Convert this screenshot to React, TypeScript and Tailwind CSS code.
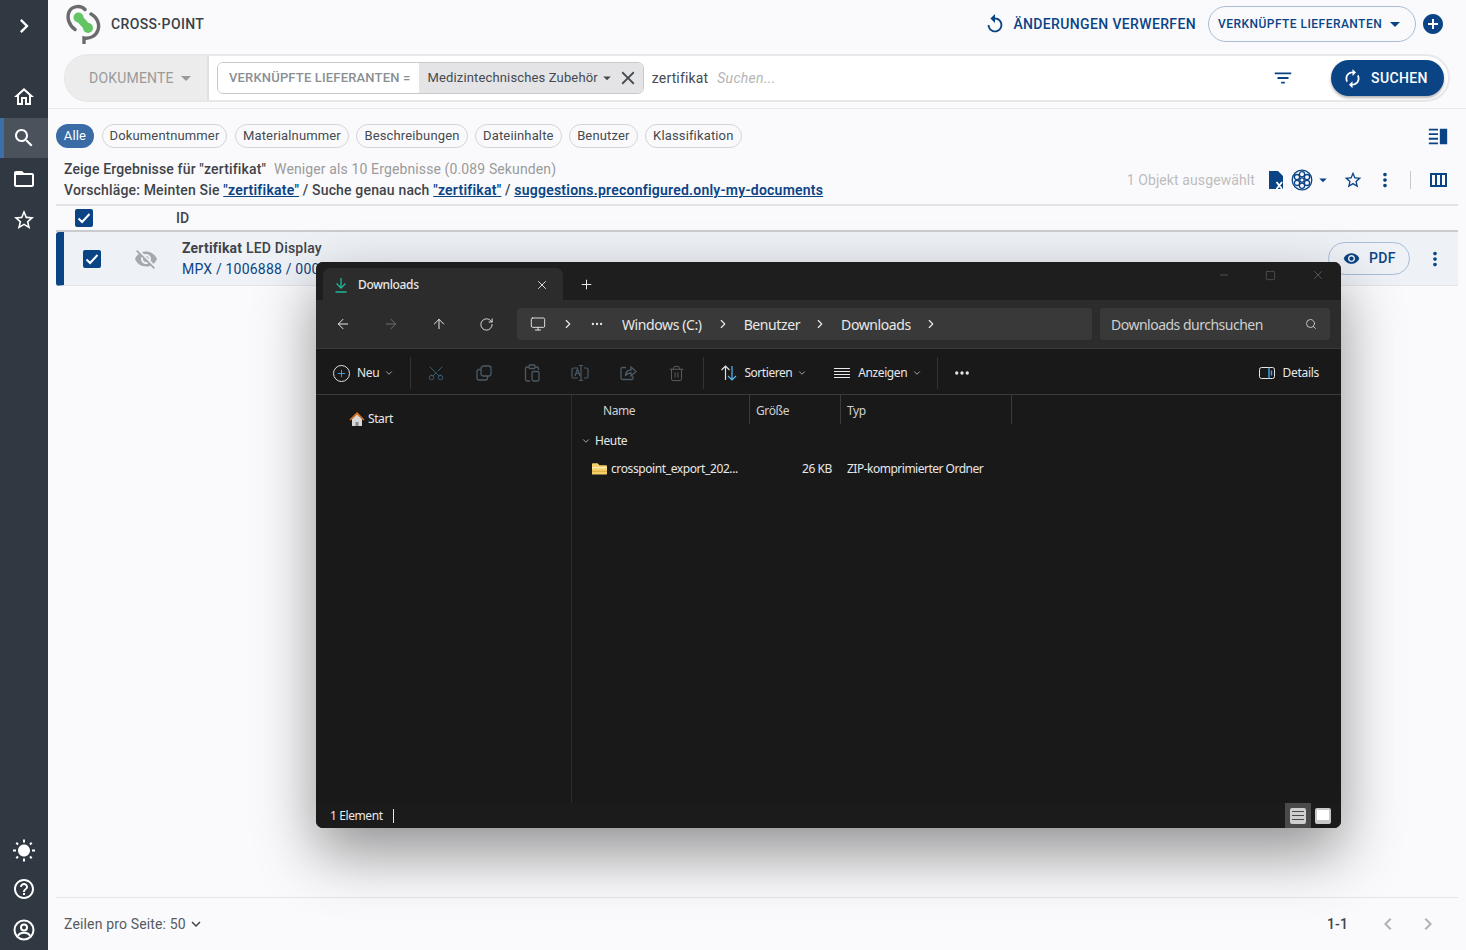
import {
  ArrowLeft,
  ArrowRight,
  ArrowUp,
  ChevronDown,
  ChevronRight,
  Ellipsis,
  Minus,
  Monitor,
  Plus,
  RotateCw,
  Scissors,
  Search,
  Square,
  Trash2,
  X,
} from 'lucide-react';
import type { ReactNode } from 'react';

const paths = {
  home: 'M12 5.69l5 4.5V18h-2v-6H9v6H7v-7.81l5-4.5M12 3L2 12h3v8h6v-6h2v6h6v-8h3L12 3z',
  search:
    'M15.5 14h-.79l-.28-.27C15.41 12.59 16 11.11 16 9.5 16 5.91 13.09 3 9.5 3S3 5.91 3 9.5 5.91 16 9.5 16c1.61 0 3.09-.59 4.23-1.57l.27.28v.79l5 4.99L20.49 19l-4.99-5zm-6 0C7.01 14 5 11.99 5 9.5S7.01 5 9.5 5 14 7.01 14 9.5 11.99 14 9.5 14z',
  folder:
    'M20 6h-8l-2-2H4c-1.1 0-1.99.9-1.99 2L2 18c0 1.1.9 2 2 2h16c1.1 0 2-.9 2-2V8c0-1.1-.9-2-2-2zm0 12H4V8h16v10z',
  star: 'M22 9.24l-7.19-.62L12 2 9.19 8.63 2 9.24l5.46 4.73L5.82 21 12 17.27 18.18 21l-1.63-7.03L22 9.24zM12 15.4l-3.76 2.27 1-4.28-3.32-2.88 4.38-.38L12 6.1l1.71 4.04 4.38.38-3.32 2.88 1 4.28L12 15.4z',
  chevronRight: 'M10 6L8.59 7.41 13.17 12l-4.58 4.59L10 18l6-6z',
  chevronLeft: 'M15.41 7.41L14 6l-6 6 6 6 1.41-1.41L10.83 12z',
  expand: 'M16.59 8.59L12 13.17 7.41 8.59 6 10l6 6 6-6z',
  sun: 'M6.76 4.84l-1.8-1.79-1.41 1.41 1.79 1.79 1.42-1.41zM4 10.5H1v2h3v-2zm9-9.95h-2V3.5h2V.55zm7.45 3.91l-1.41-1.41-1.79 1.79 1.41 1.41 1.79-1.79zm-3.21 13.7l1.79 1.8 1.41-1.41-1.8-1.79-1.4 1.4zM20 10.5v2h3v-2h-3zm-8-5c-3.31 0-6 2.69-6 6s2.69 6 6 6 6-2.69 6-6-2.69-6-6-6zm-1 16.95h2V19.5h-2v2.95zm-7.45-3.91l1.41 1.41 1.79-1.8-1.41-1.41-1.79 1.8z',
  help: 'M11 18h2v-2h-2v2zm1-16C6.48 2 2 6.48 2 12s4.48 10 10 10 10-4.48 10-10S17.52 2 12 2zm0 18c-4.41 0-8-3.59-8-8s3.59-8 8-8 8 3.59 8 8-3.59 8-8 8zm0-14c-2.21 0-4 1.79-4 4h2c0-1.1.9-2 2-2s2 .9 2 2c0 2-3 1.75-3 5h2c0-2.25 3-2.5 3-5 0-2.21-1.79-4-4-4z',
  eye: 'M12 4.5C7 4.5 2.73 7.61 1 12c1.73 4.39 6 7.5 11 7.5s9.27-3.11 11-7.5c-1.73-4.39-6-7.5-11-7.5zM12 17c-2.76 0-5-2.24-5-5s2.24-5 5-5 5 2.24 5 5-2.24 5-5 5zm0-8c-1.66 0-3 1.34-3 3s1.34 3 3 3 3-1.34 3-3-1.34-3-3-3z',
  eyeOff:
    'M12 7c2.76 0 5 2.24 5 5 0 .65-.13 1.26-.36 1.83l2.92 2.92c1.51-1.26 2.7-2.89 3.43-4.75-1.73-4.39-6-7.5-11-7.5-1.4 0-2.74.25-3.98.7l2.16 2.16C10.74 7.13 11.35 7 12 7zM2 4.27l2.28 2.28.46.46C3.08 8.3 1.78 10.02 1 12c1.73 4.39 6 7.5 11 7.5 1.55 0 3.03-.3 4.38-.84l.42.42L19.73 22 21 20.73 3.27 3 2 4.27zM7.53 9.8l1.55 1.55c-.05.21-.08.43-.08.65 0 1.66 1.34 3 3 3 .22 0 .44-.03.65-.08l1.55 1.55c-.67.33-1.41.53-2.2.53-2.76 0-5-2.24-5-5 0-.79.2-1.53.53-2.2zm4.31-.78l3.15 3.15.02-.16c0-1.66-1.34-3-3-3l-.17.01z',
  dots: 'M12 8c1.1 0 2-.9 2-2s-.9-2-2-2-2 .9-2 2 .9 2 2 2zm0 2c-1.1 0-2 .9-2 2s.9 2 2 2 2-.9 2-2-.9-2-2-2zm0 6c-1.1 0-2 .9-2 2s.9 2 2 2 2-.9 2-2-.9-2-2-2z',
  filter: 'M10 18h4v-2h-4v2zM3 6v2h18V6H3zm3 7h12v-2H6v2z',
  renew:
    'M12 6v3l4-4-4-4v3c-4.42 0-8 3.58-8 8 0 1.57.46 3.03 1.24 4.26L6.7 14.8c-.45-.83-.7-1.79-.7-2.8 0-3.31 2.69-6 6-6zm6.76 1.74L17.3 9.2c.44.84.7 1.79.7 2.8 0 3.31-2.69 6-6 6v-3l-4 4 4 4v-3c4.42 0 8-3.58 8-8 0-1.57-.46-3.03-1.24-4.26z',
  replay: 'M12 5V1L7 6l5 5V7c3.31 0 6 2.69 6 6s-2.69 6-6 6-6-2.69-6-6H4c0 4.42 3.58 8 8 8s8-3.58 8-8-3.58-8-8-8z',
  addCircle: 'M12 2C6.48 2 2 6.48 2 12s4.48 10 10 10 10-4.48 10-10S17.52 2 12 2zm5 11h-4v4h-2v-4H7v-2h4V7h2v4h4v2z',
  columns: 'M4 5v14h17V5H4zm10 2v10h-3V7h3zM6 7h3v10H6V7zm13 10h-3V7h3v10z',
  close:
    'M19 6.41L17.59 5 12 10.59 6.41 5 5 6.41 10.59 12 5 17.59 6.41 19 12 13.41 17.59 19 19 17.59 13.41 12 19 6.41z',
  caret: 'M7 10l5 5 5-5z',
  split: 'M2 4h10v2H2zM2 9h10v2H2zM2 14h10v2H2zM2 19h10v2H2zM14 4h8v17h-8z',
};

function Icon({ d, className }: { d: string; className: string }) {
  return (
    <svg viewBox="0 0 24 24" fill="currentColor" className={className}>
      <path d={d} />
    </svg>
  );
}

function CheckBox() {
  return (
    <span className="flex h-[18px] w-[18px] items-center justify-center rounded-[2px] bg-[#0b4485]">
      <svg viewBox="0 0 18 18" className="h-[18px] w-[18px]" fill="none" stroke="white" strokeWidth="2">
        <path d="M3.5 9.5l3.6 3.5 7.4-8" />
      </svg>
    </span>
  );
}

function SideItem({ d, active }: { d: string; active?: boolean }) {
  return (
    <div
      className={`flex h-10 w-12 items-center justify-center text-white ${
        active ? 'border-l-4 border-[#3d6ea8] bg-[#4a535c] pr-1' : ''
      }`}
    >
      <Icon d={d} className="h-6 w-6" />
    </div>
  );
}

function Sidebar() {
  return (
    <aside className="flex h-[950px] w-12 shrink-0 flex-col bg-[#303842] pt-[6px]">
      <div className="flex h-10 w-12 items-center justify-center text-white">
        <Icon d={paths.chevronRight} className="h-7 w-7" />
      </div>
      <div className="mt-[31px] flex flex-col gap-[1px]">
        <SideItem d={paths.home} />
        <SideItem d={paths.search} active />
        <SideItem d={paths.folder} />
        <SideItem d={paths.star} />
      </div>
      <div className="mt-auto flex flex-col">
        <SideItem d={paths.sun} />
        <div className="mb-[3px] flex h-9 w-12 items-center justify-center text-white">
          <Icon d={paths.help} className="h-6 w-6" />
        </div>
        <div className="flex h-10 w-12 items-center justify-center text-white">
          <svg viewBox="0 0 24 24" fill="none" stroke="currentColor" strokeWidth="2" className="h-6 w-6">
            <circle cx="12" cy="12" r="9.5" />
            <circle cx="12" cy="9.5" r="3" />
            <path d="M6 18c1-3 3-3.2 6-3.2s5 .2 6 3.2" />
          </svg>
        </div>
      </div>
    </aside>
  );
}

function Logo() {
  return (
    <svg viewBox="0 0 36 40" className="h-[40px] w-[36px]" fill="none">
      <path d="M12.500 13.500l9.500 10.500" stroke="#62c462" strokeWidth="7.500" strokeLinecap="round" />
      <circle cx="12.500" cy="13.500" r="5" fill="#62c462" />
      <circle cx="22" cy="24" r="5" fill="#62c462" />
      <path d="M19 5.500C15 1 6 1.500 3 8c-2.500 6 .5 14 6 17.500" stroke="#6b6b6b" strokeWidth="3.4" strokeLinecap="round" />
      <path d="M25 10c6 3 9 10 7 16-2 6-8 9-14 8v6" stroke="#6b6b6b" strokeWidth="3.4" strokeLinecap="round" />
    </svg>
  );
}

function Header() {
  return (
    <header className="mb-[6px] flex h-12 items-center pl-[18px] pr-[21px]">
      <Logo />
      <span className="ml-[9px] text-[14px] font-medium tracking-[0.35px] text-[#3b4148]">CROSS·POINT</span>
      <div className="ml-auto flex items-center text-[#0b4485]">
        <Icon d={paths.replay} className="h-[22px] w-[22px]" />
        <span className="ml-[7px] text-[14px] font-medium tracking-[0.36px]">ÄNDERUNGEN VERWERFEN</span>
        <span className="ml-3 flex h-[36px] w-[208px] items-center rounded-full border border-[#a9bdd6] pl-[9px] text-[12px] font-medium tracking-[0.46px]">
          VERKNÜPFTE LIEFERANTEN
          <Icon d={paths.caret} className="ml-[1px] h-6 w-6" />
        </span>
        <Icon d={paths.addCircle} className="ml-[5px] h-6 w-6" />
      </div>
    </header>
  );
}

function SearchBar() {
  return (
    <div className="mx-4 flex h-12 items-center rounded-full border-2 border-[#e8e8ea] bg-white">
      <div className="flex h-full w-[143px] items-center rounded-l-full border-r-2 border-[#e0e0e0] bg-[#ececec] pl-[23px] text-[14px] tracking-[0.2px] text-[#9a9a9a]">
        DOKUMENTE
        <Icon d={paths.caret} className="h-6 w-6 text-[#9a9a9a]" />
      </div>
      <div className="ml-[8px] flex h-8 items-stretch overflow-hidden rounded-[6px] border border-[#c9c9c9]">
        <span className="flex items-center bg-white pr-[9px] pl-[11px] text-[13px] font-medium tracking-[0.17px] text-[#8a8f94]">
          VERKNÜPFTE LIEFERANTEN =
        </span>
        <span className="flex items-center bg-[#e4e4e6] pl-2 pr-[4px] text-[13px] tracking-[0.15px] text-[#454a50]">
          Medizintechnisches Zubehör
          <Icon d={paths.caret} className="h-[18px] w-[18px]" />
          <Icon d={paths.close} className="ml-[1px] h-[22px] w-[22px]" />
        </span>
      </div>
      <span className="ml-2 text-[14px] tracking-[0.15px] text-[#454a50]">zertifikat</span>
      <span className="ml-[9px] text-[14px] tracking-[0.3px] text-[#b5b5b5] italic">Suchen...</span>
      <Icon d={paths.filter} className="ml-auto h-[22px] w-[22px] text-[#0b4485]" />
      <button className="mr-[4px] ml-[37px] flex h-9 w-[113px] items-center rounded-full bg-[#0b4485] pl-[11px] text-[14px] font-medium tracking-[0.4px] text-white shadow-[0_2px_3px_rgba(0,0,0,0.3)]">
        <Icon d={paths.renew} className="h-[21px] w-[21px]" />
        <span className="ml-[8px]">SUCHEN</span>
      </button>
    </div>
  );
}

function Chip({ children, active }: { children: ReactNode; active?: boolean }) {
  return (
    <span
      className={`flex h-6 items-center justify-center rounded-full text-[13px] tracking-[0.15px] ${
        active ? 'w-[38px] bg-[#3a6ba5] text-white' : 'border border-[#d5d5d8] px-[7px] text-[#454a50]'
      }`}
    >
      {children}
    </span>
  );
}

function Results() {
  const link = 'font-semibold tracking-[0.23px] text-[#0b4485] underline';
  return (
    <div className="flex min-h-0 flex-1 flex-col pl-2 pr-2">
      <div className="flex h-6 items-center gap-[7.5px]">
        <Chip active>Alle</Chip>
        <Chip>Dokumentnummer</Chip>
        <Chip>Materialnummer</Chip>
        <Chip>Beschreibungen</Chip>
        <Chip>Dateiinhalte</Chip>
        <Chip>Benutzer</Chip>
        <Chip>Klassifikation</Chip>
        <Icon d={paths.split} className="mr-[9px] ml-auto h-[22px] w-[22px] text-[#0b4485]" />
      </div>
      <div className="mt-[11px] flex h-[47px] border-b-2 border-[#e2e2e4] pl-2 text-[14px] leading-[21px] text-[#3f444a]">
        <div>
          <div className="font-medium tracking-[0.15px]">
            Zeige Ergebnisse für "zertifikat"
            <span className="ml-2 font-normal tracking-[0.12px] text-[#9b9b9b]">
              Weniger als 10 Ergebnisse (0.089 Sekunden)
            </span>
          </div>
          <div className="font-medium tracking-[0.17px]">
            Vorschläge: Meinten Sie <a className={link}>"zertifikate"</a> / Suche genau nach{' '}
            <a className={link}>"zertifikat"</a> / <a className={link}>suggestions.preconfigured.only-my-documents</a>
          </div>
        </div>
        <div className="ml-auto flex h-[40px] items-center pt-[2px] text-[#0b4485]">
          <span className="mr-[14px] text-[14px] tracking-[0.1px] text-[#bdbdbd]">1 Objekt ausgewählt</span>
          <svg viewBox="0 0 15 18" className="h-[18px] w-[15px]" fill="currentColor">
            <path d="M0 0h9l5 5v13H0z" />
            <path d="M7.500 11l5.500 7M13 11l-5.500 7" stroke="white" strokeWidth="1.8" />
          </svg>
          <svg viewBox="0 0 22 22" className="ml-[7px] h-[22px] w-[22px]" fill="none" stroke="currentColor" strokeWidth="1.3">
            <circle cx="11" cy="11" r="9.800" />
            <circle cx="11" cy="11" r="2.200" />
            <circle cx="11" cy="5.200" r="2.600" />
            <circle cx="11" cy="16.800" r="2.600" />
            <circle cx="16" cy="8.100" r="2.600" />
            <circle cx="16" cy="13.900" r="2.600" />
            <circle cx="6" cy="8.100" r="2.600" />
            <circle cx="6" cy="13.900" r="2.600" />
          </svg>
          <Icon d={paths.caret} className="ml-[1px] h-[18px] w-[18px]" />
          <Icon d={paths.star} className="ml-[11px] h-[20px] w-[20px]" />
          <Icon d={paths.dots} className="ml-[11px] h-[22px] w-[22px]" />
          <span className="ml-[14px] h-[18px] w-[1px] bg-[#c9c9c9]" />
          <Icon d={paths.columns} className="mr-[8px] ml-[15px] h-6 w-6" />
        </div>
      </div>
      <div className="flex h-[26px] items-center border-b-2 border-[#c9cbce] pl-[19px] text-[14px] font-medium text-[#3f444a]">
        <CheckBox />
        <span className="ml-[83px] pt-[1px]">ID</span>
      </div>
      <div className="flex h-[54px] items-center rounded-l-[3px] border-b border-[#e2e4e8] border-l-8 border-l-[#0b4485] bg-[#eef1f6] pr-[12px] pl-[19px]">
        <CheckBox />
        <Icon d={paths.eyeOff} className="ml-[33px] h-[24px] w-[24px] text-[#a5a8ac]" />
        <div className="ml-[24px] text-[14px] leading-[21px] tracking-[0.2px]">
          <div className="font-medium text-[#3f444a]">
            <b className="font-bold">Zertifikat</b> LED Display
          </div>
          <div className="text-[#0b4485]">MPX / 1006888 / 000</div>
        </div>
        <span className="ml-auto flex h-[33px] w-[82px] items-center rounded-full border border-[#a9bdd6] pl-[14px] text-[14px] font-medium tracking-[0.3px] text-[#0b4485]">
          <Icon d={paths.eye} className="h-[17px] w-[17px]" />
          <span className="ml-[9px]">PDF</span>
        </span>
        <Icon d={paths.dots} className="ml-[14px] h-[22px] w-[22px] text-[#0b4485]" />
      </div>
      <div className="flex-1" />
      <div className="flex h-[53px] items-center border-t border-[#e5e5e7] pl-2 text-[14px] tracking-[0.15px] text-[#565b61]">
        Zeilen pro Seite: 50
        <Icon d={paths.expand} className="ml-[1px] h-[18px] w-[18px] text-[#3f444a]" />
        <span className="ml-auto font-medium text-[#3f444a]">1-1</span>
        <Icon d={paths.chevronLeft} className="ml-[28px] h-6 w-6 text-[#b0b0b4]" />
        <Icon d={paths.chevronRight} className="mr-[18px] ml-[16px] h-6 w-6 text-[#b0b0b4]" />
      </div>
    </div>
  );
}

function ToolIcon({ children }: { children: ReactNode }) {
  return <span className="flex w-12 items-center justify-center">{children}</span>;
}

function Explorer() {
  return (
    <div className="absolute top-[262px] left-[316px] flex h-[566px] w-[1025px] flex-col overflow-hidden rounded-[7px] bg-[#191919] font-['Noto_Sans',sans-serif] text-[#e8e8e8] shadow-[0_25px_60px_rgba(0,0,0,0.42)]">
      <div className="flex h-[38px] shrink-0 items-end bg-[#1e1e1e] pl-[7px]">
        <div className="flex h-[32px] w-[240px] items-center rounded-t-[7px] bg-[#2c2c2c] pt-[1px] pl-[11px]">
          <svg viewBox="0 0 14 16" className="h-[16px] w-[14px] text-[#1fb69a]" fill="none" stroke="currentColor" strokeWidth="1.3">
            <path d="M7 1v10M2.500 6.500L7 11l4.500-4.500M1.500 15h11" />
          </svg>
          <span className="ml-[10px] text-[12px] font-medium tracking-[-0.35px]">Downloads</span>
          <X className="mr-[14px] ml-auto h-[14px] w-[14px]" strokeWidth={1.6} />
        </div>
        <div className="flex h-[32px] items-center">
          <Plus className="ml-[16px] h-[15px] w-[15px]" strokeWidth={1.6} />
        </div>
        <div className="ml-auto flex h-[38px] items-center self-start pb-[12px] text-[#6e6e6e]">
          <Minus className="mr-[35px] h-[12px] w-[12px]" strokeWidth={1.2} />
          <Square className="mr-[35px] h-[11px] w-[11px]" strokeWidth={1.2} />
          <X className="mr-[16px] h-[14px] w-[14px]" strokeWidth={1.2} />
        </div>
      </div>

      <div className="flex h-[49px] shrink-0 items-center border-b border-[#3a3a3a] bg-[#2c2c2c] pl-[19px]">
        <ArrowLeft className="h-[16px] w-[16px]" strokeWidth={1.5} />
        <ArrowRight className="ml-[32px] h-[16px] w-[16px] text-[#6c6c6c]" strokeWidth={1.5} />
        <ArrowUp className="ml-[32px] h-[16px] w-[16px]" strokeWidth={1.5} />
        <RotateCw className="ml-[32px] h-[15px] w-[15px]" strokeWidth={1.5} />
        <div className="ml-[23px] flex h-[32px] w-[575px] items-center rounded-[4px] bg-[#393939] pl-[13px] text-[14px] tracking-[-0.4px]">
          <Monitor className="h-[16px] w-[16px]" strokeWidth={1.4} />
          <ChevronRight className="ml-[15px] h-[14px] w-[14px]" strokeWidth={2} />
          <Ellipsis className="ml-[15px] h-[14px] w-[14px]" strokeWidth={2} />
          <span className="ml-[18px]">Windows (C:)</span>
          <ChevronRight className="ml-[14px] h-[14px] w-[14px]" strokeWidth={2} />
          <span className="ml-[14px]">Benutzer</span>
          <ChevronRight className="ml-[13px] h-[14px] w-[14px]" strokeWidth={2} />
          <span className="ml-[14px]">Downloads</span>
          <ChevronRight className="ml-[13px] h-[14px] w-[14px]" strokeWidth={2} />
        </div>
        <div className="ml-[8px] flex h-[32px] w-[230px] items-center rounded-[4px] bg-[#393939] pl-[11px] text-[14px] tracking-[-0.5px] text-[#cfcfcf]">
          Downloads durchsuchen
          <Search className="mr-[13px] ml-auto h-[12px] w-[12px]" strokeWidth={1.8} />
        </div>
      </div>

      <div className="flex h-[46px] shrink-0 items-center border-b border-[#3a3a3a] pt-[3px] pl-[17px] text-[12px] tracking-[-0.3px]">
        <span className="flex h-[17px] w-[17px] items-center justify-center rounded-full border border-[#e0e0e0]">
          <Plus className="h-[11px] w-[11px] text-[#3fa9f5]" strokeWidth={2} />
        </span>
        <span className="ml-[7px]">Neu</span>
        <ChevronDown className="ml-[5px] h-[10px] w-[10px]" strokeWidth={1.6} />
        <span className="ml-[16px] h-[32px] w-[1px] bg-[#333]" />
        <div className="ml-[1px] flex">
          <ToolIcon>
            <Scissors className="h-[18px] w-[18px] -rotate-90 text-[#3c6078]" strokeWidth={1.3} />
          </ToolIcon>
          <ToolIcon>
            <svg viewBox="0 0 18 18" className="h-[18px] w-[18px] text-[#4b5a64]" fill="none" stroke="currentColor" strokeWidth="1.3">
              <rect x="6" y="2" width="10" height="10" rx="2.500" />
              <path d="M6 5.500H4a2 2 0 00-2 2V14a2 2 0 002 2h6.500a2 2 0 002-2v-2" />
            </svg>
          </ToolIcon>
          <ToolIcon>
            <svg viewBox="0 0 18 18" className="h-[18px] w-[18px] text-[#4b5a64]" fill="none" stroke="currentColor" strokeWidth="1.3">
              <path d="M6 3H4a1.500 1.500 0 00-1.500 1.500v11A1.500 1.500 0 004 17h3M12 3h2a1.500 1.500 0 011.500 1.500V6" />
              <rect x="6" y="1" width="6" height="3.500" rx="1" />
              <rect x="9" y="7.500" width="7" height="9.500" rx="1.500" />
            </svg>
          </ToolIcon>
          <ToolIcon>
            <svg viewBox="0 0 18 18" className="h-[18px] w-[18px] text-[#4b5a64]" fill="none" stroke="currentColor" strokeWidth="1.2">
              <path d="M7 4H2.500a1.500 1.500 0 00-1.500 1.500v7A1.500 1.500 0 002.500 14H7M13 4h2.500A1.500 1.500 0 0117 5.500v7a1.500 1.500 0 01-1.500 1.500H13M10 1.500v15M8 1.500h4M8 16.500h4" />
              <path d="M4 12l2.500-7L9 12M5 9.500h3" />
            </svg>
          </ToolIcon>
          <ToolIcon>
            <svg viewBox="0 0 18 18" className="h-[18px] w-[18px] text-[#4b5a64]" fill="none" stroke="currentColor" strokeWidth="1.3">
              <path d="M7 3.500H3.500A1.500 1.500 0 002 5v9a1.500 1.500 0 001.500 1.500h9A1.500 1.500 0 0014 14v-2" />
              <path d="M6.500 12c0-4 2.500-6 5.500-6V3l5 4.500L12 12V9c-2.500 0-4.500 1-5.500 3z" />
            </svg>
          </ToolIcon>
          <ToolIcon>
            <Trash2 className="h-[17px] w-[17px] text-[#5c5c5c]" strokeWidth={1.4} />
          </ToolIcon>
        </div>
        <span className="ml-[3px] h-[32px] w-[1px] bg-[#333]" />
        <svg viewBox="0 0 18 16" className="ml-[16px] h-[16px] w-[18px]" fill="none" strokeWidth="1.2">
          <path d="M5.500 15V1M1.500 5l4-4 4 4" stroke="#e0e0e0" />
          <path d="M12 1v14M8 11l4 4 4-4" stroke="#5cb6f0" />
        </svg>
        <span className="ml-[6px] tracking-[-0.45px]">Sortieren</span>
        <ChevronDown className="ml-[5px] h-[10px] w-[10px]" strokeWidth={1.6} />
        <svg viewBox="0 0 16 12" className="ml-[27px] h-[12px] w-[16px]" fill="none" stroke="currentColor" strokeWidth="1">
          <path d="M0 1.500h16M0 4.500h16M0 7.500h16M0 10.500h16" />
        </svg>
        <span className="ml-[8px] tracking-[-0.4px]">Anzeigen</span>
        <ChevronDown className="ml-[5px] h-[10px] w-[10px]" strokeWidth={1.6} />
        <span className="ml-[15px] h-[32px] w-[1px] bg-[#333]" />
        <Ellipsis className="ml-[15px] h-[18px] w-[18px]" strokeWidth={2.4} />
        <svg viewBox="0 0 16 14" className="ml-auto h-[14px] w-[16px]" fill="none" stroke="currentColor" strokeWidth="1">
          <rect x="0.500" y="1.500" width="15" height="11" rx="2" />
          <path d="M10 1.500v11" stroke="#3fa9f5" strokeWidth="1.4" />
          <path d="M12.500 4.500v5" stroke="#3fa9f5" strokeWidth="1.4" />
        </svg>
        <span className="mr-[22px] ml-[8px]">Details</span>
      </div>

      <div className="flex min-h-0 flex-1 text-[12px] tracking-[-0.4px]">
        <div className="w-[256px] shrink-0 border-r border-[#2c2c2c] pt-[15px] pl-[33px]">
          <div className="flex items-center">
            <svg viewBox="0 0 16 16" className="h-[16px] w-[16px]">
              <path d="M3 8v7h10V8L8 3z" fill="#d8d8d8" />
              <path d="M6.500 15v-4h3v4z" fill="#8a8a8a" />
              <path d="M0.500 8.500L8 1l7.500 7.500-1 1L8 3.500 1.500 9.500z" fill="#e0701a" />
            </svg>
            <span className="ml-[3px]">Start</span>
          </div>
        </div>
        <div className="min-w-0 flex-1">
          <div className="flex h-[29px] text-[#d0d0d0]">
            <span className="w-[178px] border-r border-[#3a3a3a] pt-[7px] pl-[31px]">Name</span>
            <span className="w-[91px] border-r border-[#3a3a3a] pt-[7px] pl-[6px]">Größe</span>
            <span className="w-[171px] border-r border-[#3a3a3a] pt-[7px] pl-[6px]">Typ</span>
          </div>
          <div className="mt-[8px] flex items-center pl-[9px]">
            <ChevronDown className="h-[10px] w-[10px]" strokeWidth={1.6} />
            <span className="ml-[4px]">Heute</span>
          </div>
          <div className="mt-[10px] flex h-[17px] items-center pl-[20px]">
            <svg viewBox="0 0 16 13" className="h-[13px] w-[15px]">
              <path d="M0 2a1 1 0 011-1h5l2 2h7a1 1 0 011 1v8a1 1 0 01-1 1H1a1 1 0 01-1-1z" fill="#f4cf6a" />
              <path d="M0 5h16v1.500H0z" fill="#fbe9b0" />
              <path d="M0 9h16v1H0z" fill="#d9a93f" />
            </svg>
            <span className="ml-[4px] w-[150px]">crosspoint_export_202...</span>
            <span className="w-[71px] text-right">26 KB</span>
            <span className="ml-[15px] tracking-[-0.5px]">ZIP-komprimierter Ordner</span>
          </div>
        </div>
      </div>

      <div className="flex h-[25px] shrink-0 items-center bg-[#1b1b1b] pl-[14px] text-[12px] tracking-[-0.4px]">
        1 Element
        <span className="ml-[10px] h-[14px] w-[1.5px] bg-[#e8e8e8]" />
        <div className="ml-auto flex h-full items-center pr-[10px]">
          <span className="flex h-full w-[26px] items-center justify-center bg-[#4a4a4a]">
            <span className="flex h-[16px] w-[16px] flex-col justify-evenly rounded-[2px] bg-[#cfcfcf] px-[2px]">
              <span className="h-[1px] bg-[#4a4a4a]" />
              <span className="h-[1px] bg-[#4a4a4a]" />
              <span className="h-[1px] bg-[#4a4a4a]" />
            </span>
          </span>
          <span className="ml-[4px] h-[16px] w-[16px] rounded-[2px] border-2 border-b-4 border-[#c9c9c9] bg-white" />
        </div>
      </div>
    </div>
  );
}

export default function App() {
  return (
    <div className="relative flex h-[950px] overflow-hidden bg-[#fafafc] font-['Roboto',sans-serif]">
      <Sidebar />
      <main className="flex min-w-0 flex-1 flex-col">
        <Header />
        <SearchBar />
        <div className="mt-[6px] h-[1px] bg-[#e8e8ea]" />
        <div className="mt-[15px] flex min-h-0 flex-1 flex-col">
          <Results />
        </div>
      </main>
      <Explorer />
    </div>
  );
}
